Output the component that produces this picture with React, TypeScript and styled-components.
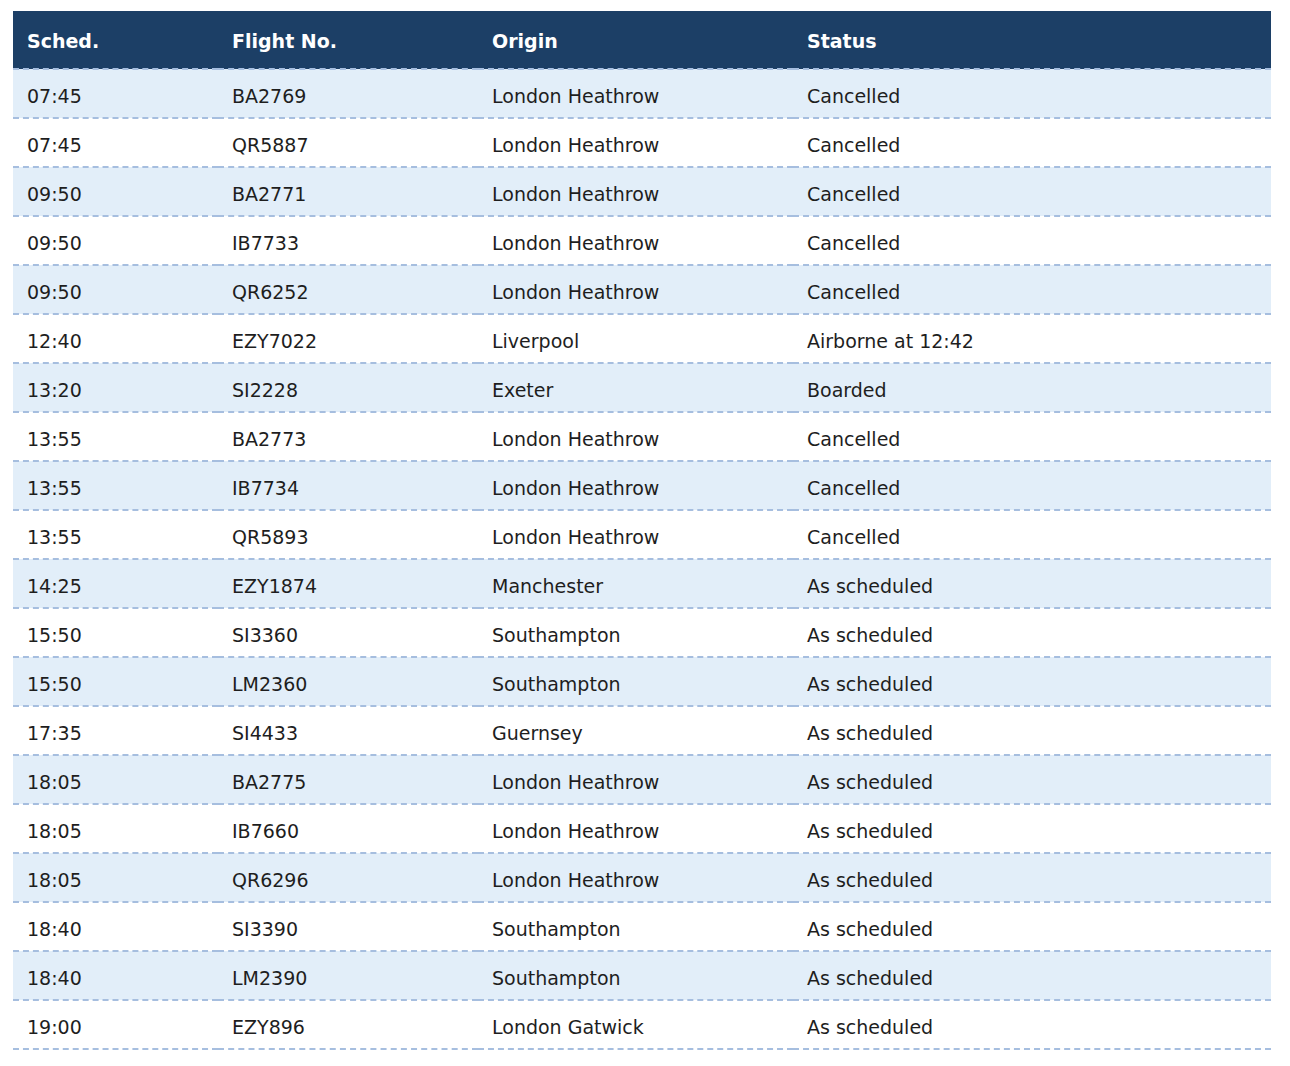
import styled, { createGlobalStyle } from "styled-components"

const GlobalStyle = createGlobalStyle`
  html, body {
    margin: 0;
    padding: 0;
    background: #ffffff;
  }
`

type Flight = {
  sched: string
  flightNo: string
  origin: string
  status: string
}

const flights: Flight[] = [
  { sched: "07:45", flightNo: "BA2769", origin: "London Heathrow", status: "Cancelled" },
  { sched: "07:45", flightNo: "QR5887", origin: "London Heathrow", status: "Cancelled" },
  { sched: "09:50", flightNo: "BA2771", origin: "London Heathrow", status: "Cancelled" },
  { sched: "09:50", flightNo: "IB7733", origin: "London Heathrow", status: "Cancelled" },
  { sched: "09:50", flightNo: "QR6252", origin: "London Heathrow", status: "Cancelled" },
  { sched: "12:40", flightNo: "EZY7022", origin: "Liverpool", status: "Airborne at 12:42" },
  { sched: "13:20", flightNo: "SI2228", origin: "Exeter", status: "Boarded" },
  { sched: "13:55", flightNo: "BA2773", origin: "London Heathrow", status: "Cancelled" },
  { sched: "13:55", flightNo: "IB7734", origin: "London Heathrow", status: "Cancelled" },
  { sched: "13:55", flightNo: "QR5893", origin: "London Heathrow", status: "Cancelled" },
  { sched: "14:25", flightNo: "EZY1874", origin: "Manchester", status: "As scheduled" },
  { sched: "15:50", flightNo: "SI3360", origin: "Southampton", status: "As scheduled" },
  { sched: "15:50", flightNo: "LM2360", origin: "Southampton", status: "As scheduled" },
  { sched: "17:35", flightNo: "SI4433", origin: "Guernsey", status: "As scheduled" },
  { sched: "18:05", flightNo: "BA2775", origin: "London Heathrow", status: "As scheduled" },
  { sched: "18:05", flightNo: "IB7660", origin: "London Heathrow", status: "As scheduled" },
  { sched: "18:05", flightNo: "QR6296", origin: "London Heathrow", status: "As scheduled" },
  { sched: "18:40", flightNo: "SI3390", origin: "Southampton", status: "As scheduled" },
  { sched: "18:40", flightNo: "LM2390", origin: "Southampton", status: "As scheduled" },
  { sched: "19:00", flightNo: "EZY896", origin: "London Gatwick", status: "As scheduled" },
]

const Page = styled.div`
  padding: 11px 0 0 13px;
`

const Table = styled.table`
  width: 1258px;
  border-collapse: collapse;
  table-layout: fixed;
  font-family: "DejaVu Sans", Verdana, sans-serif;
  font-size: 19px;
  color: #1e1e1e;
`

const HeadRow = styled.tr`
  height: 58px;
  background-color: #1c3f66;
`

const HeadCell = styled.th`
  padding: 3px 14px 0;
  text-align: left;
  font-weight: bold;
  color: #ffffff;
  border-bottom: 2px dashed #a6bedf;
`

const BodyRow = styled.tr<{ $striped: boolean }>`
  height: 49px;
  background-color: ${({ $striped }) => ($striped ? "#e2eef9" : "#ffffff")};
`

const Cell = styled.td`
  padding: 5px 14px 0;
  border-bottom: 2px dashed #a6bedf;
  white-space: nowrap;
`

const columns = [
  { label: "Sched.", width: 205 },
  { label: "Flight No.", width: 260 },
  { label: "Origin", width: 315 },
  { label: "Status", width: 478 },
]

export default function App() {
  return (
    <Page>
      <GlobalStyle />
      <Table>
        <colgroup>
          {columns.map((col) => (
            <col key={col.label} style={{ width: col.width }} />
          ))}
        </colgroup>
        <thead>
          <HeadRow>
            {columns.map((col) => (
              <HeadCell key={col.label} scope="col">
                {col.label}
              </HeadCell>
            ))}
          </HeadRow>
        </thead>
        <tbody>
          {flights.map((f, i) => (
            <BodyRow key={f.flightNo} $striped={i % 2 === 0}>
              <Cell>{f.sched}</Cell>
              <Cell>{f.flightNo}</Cell>
              <Cell>{f.origin}</Cell>
              <Cell>{f.status}</Cell>
            </BodyRow>
          ))}
        </tbody>
      </Table>
    </Page>
  )
}
